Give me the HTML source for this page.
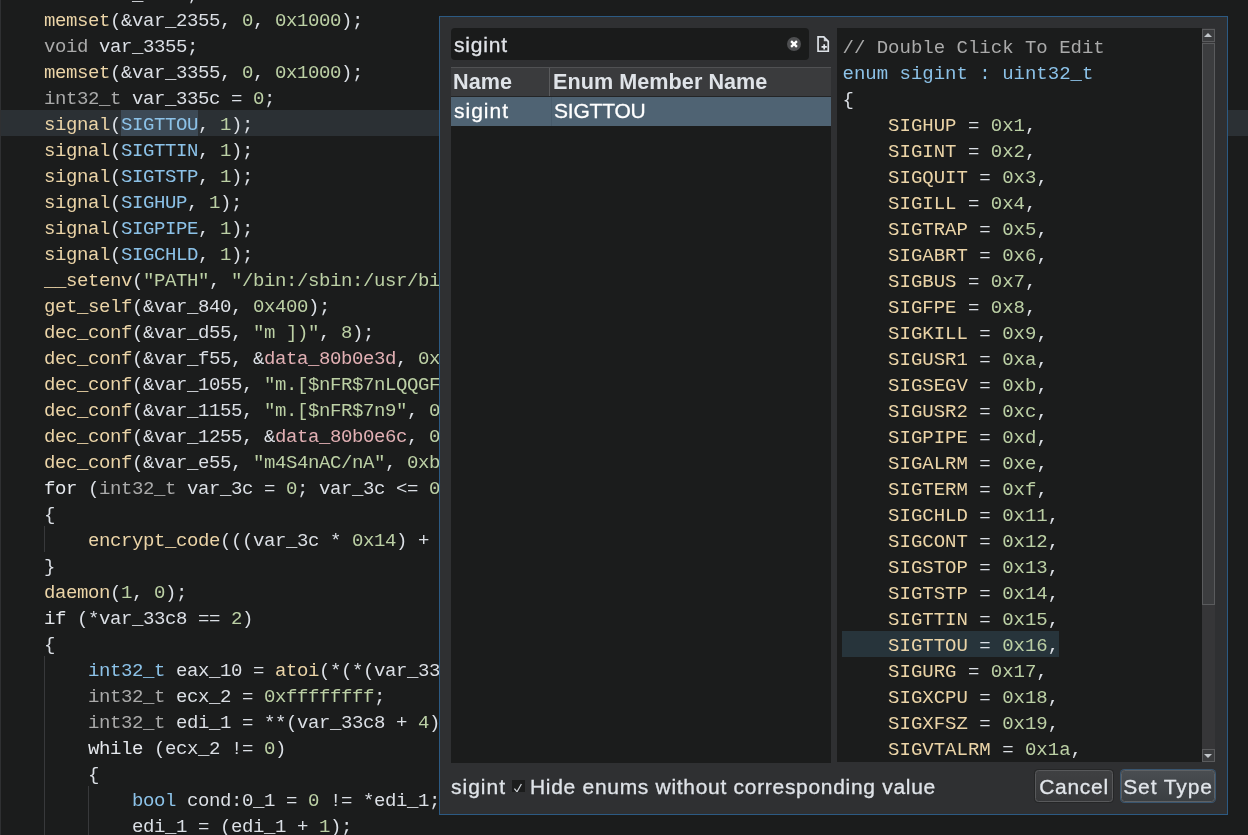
<!DOCTYPE html>
<html>
<head>
<meta charset="utf-8">
<title>Select Enum</title>
<style>
html,body{margin:0;padding:0;}
body{width:1248px;height:835px;overflow:hidden;background:#1b1c1c;position:relative;font-family:"Liberation Sans",sans-serif;}
#root{position:absolute;left:0;top:0;width:1248px;height:835px;will-change:transform;}
#code{position:absolute;left:0;top:0;width:1248px;height:835px;overflow:hidden;font-family:"Liberation Mono","DejaVu Sans Mono",monospace;font-size:19px;letter-spacing:-0.4019px;color:#dbdfe5;}
#code .edge{position:absolute;left:0;top:0;width:1px;height:835px;background:#2f3032;z-index:3;}
.ln{position:absolute;left:0;width:1248px;height:26px;line-height:26px;white-space:pre;}
.ln.hl{background:#2b3034;}
.tx{position:absolute;top:2px;height:26px;}
.guide{position:absolute;width:1px;background:#38393b;}
.f{color:#ebd4a7;}
.n{color:#bcd0a5;}
.s{color:#bcd0a5;}
.t{color:#8cc2e8;}
.g{color:#aaaaaa;}
.e{color:#8cc2e8;}
.h{color:#8cc2e8;background:#3d4a56;display:inline-block;height:26px;position:relative;top:-2px;line-height:30px;vertical-align:top;}
.d{color:#e2b0b4;}
.k{color:#e6e9ee;}
.c{color:#aaaaaa;}
#dlg{position:absolute;left:439px;top:16px;width:787px;height:797px;border:1px solid #2c5a83;background:#2f3032;}
#inp{position:absolute;left:11px;top:11px;width:358px;height:32px;border-radius:4px;background:#1a1b1b;}
#inp .v{position:absolute;left:3px;top:0;line-height:33px;font-size:21px;letter-spacing:0.8px;-webkit-text-stroke:0.3px #e0e3e8;color:#e0e3e8;}
#clr{position:absolute;left:335px;top:8px;width:16px;height:16px;}
#ficon{position:absolute;left:377.3px;top:19.1px;width:13px;height:17px;}
#tbl{position:absolute;left:11px;top:50px;width:380px;height:696px;background:#1b1c1c;}
#th{position:absolute;left:0;top:0;width:380px;height:30px;background:#3a3b3d;border-top:1px solid #505153;border-bottom:1px solid #242526;box-sizing:border-box;}
#th b{position:absolute;top:0;line-height:28px;font-size:21.6px;letter-spacing:0.05px;color:#dfe3e8;font-weight:bold;}
#th .sep{position:absolute;left:98px;top:0;width:1px;height:28px;background:#5a5b5d;}
#tr{position:absolute;left:0;top:30px;width:380px;height:29px;background:#4f6373;}
#tr span{position:absolute;top:0;line-height:28px;font-size:21px;color:#fff;-webkit-text-stroke:0.3px #fff;}
#tr .sep{position:absolute;left:100px;top:0;width:1px;height:29px;background:#485b6b;}
#rp{position:absolute;left:397px;top:11px;width:378px;height:734px;background:#1b1c1c;overflow:hidden;}
#rcode{position:absolute;left:5.5px;top:6.5px;font-family:"Liberation Mono","DejaVu Sans Mono",monospace;font-size:19px;color:#dbdfe5;}
.rl{height:26px;line-height:26px;white-space:pre;position:relative;}
.rbar{position:absolute;left:5px;top:603px;width:217px;height:26px;background:#27343b;}
#sb{position:absolute;left:365px;top:0;width:13px;height:734px;background:#363638;}
#sb .up,#sb .dn{position:absolute;left:0;width:11px;height:11px;border:1px solid #5a5b5d;background:#3b3c3e;}
#sb .up{top:1px;}
#sb .dn{top:721px;}
#sb .thumb{position:absolute;left:0;top:15px;width:11px;height:560px;border:1px solid #5a5b5d;background:#3c3d3f;}
#sb .up i{position:absolute;left:0.5px;top:3px;width:0;height:0;border-left:4px solid transparent;border-right:4px solid transparent;border-bottom:4.5px solid #c2c6ca;}
#sb .dn i{position:absolute;left:0.5px;top:3.5px;width:0;height:0;border-left:4px solid transparent;border-right:4px solid transparent;border-top:4.5px solid #c2c6ca;}
#bot{position:absolute;left:11px;top:754px;height:32px;line-height:32px;font-size:21px;color:#dfe3e8;white-space:nowrap;-webkit-text-stroke:0.3px #dfe3e8;}
#bot span{position:absolute;top:0;}
#cb{position:absolute;left:72px;top:763px;width:13px;height:12px;background:#1b1c1c;overflow:hidden;}
.btn{position:absolute;top:753px;height:30px;border:1px solid #58595b;border-radius:3.5px;background:linear-gradient(#3f4042,#37383a);box-shadow:0 0 0 1px #252627;color:#e1e5ea;font-size:21px;line-height:32px;text-align:center;-webkit-text-stroke:0.3px #e1e5ea;}
#b1{left:595px;width:76px;letter-spacing:0.7px;}
#b2{left:681px;width:92px;border-color:#5e6164;background:linear-gradient(#494d51,#3b3f42);box-shadow:0 0 0 1px #39556f;letter-spacing:0.9px;}
</style>
</head>
<body>
<div id="root">
<div id="code">
<div class="edge"></div>
<div class="ln" style="top:-20px"><span class="tx" style="left:44px"><span class="g">void</span> var_2355;</span></div>
<div class="ln" style="top:6px"><span class="tx" style="left:44px"><span class="f">memset</span>(&amp;var_2355, <span class="n">0</span>, <span class="n">0x1000</span>);</span></div>
<div class="ln" style="top:32px"><span class="tx" style="left:44px"><span class="g">void</span> var_3355;</span></div>
<div class="ln" style="top:58px"><span class="tx" style="left:44px"><span class="f">memset</span>(&amp;var_3355, <span class="n">0</span>, <span class="n">0x1000</span>);</span></div>
<div class="ln" style="top:84px"><span class="tx" style="left:44px"><span class="g">int32_t</span> var_335c = <span class="n">0</span>;</span></div>
<div class="ln hl" style="top:110px"><span class="tx" style="left:44px"><span class="f">signal</span>(<span class="h">SIGTTOU</span>, <span class="n">1</span>);</span></div>
<div class="ln" style="top:136px"><span class="tx" style="left:44px"><span class="f">signal</span>(<span class="e">SIGTTIN</span>, <span class="n">1</span>);</span></div>
<div class="ln" style="top:162px"><span class="tx" style="left:44px"><span class="f">signal</span>(<span class="e">SIGTSTP</span>, <span class="n">1</span>);</span></div>
<div class="ln" style="top:188px"><span class="tx" style="left:44px"><span class="f">signal</span>(<span class="e">SIGHUP</span>, <span class="n">1</span>);</span></div>
<div class="ln" style="top:214px"><span class="tx" style="left:44px"><span class="f">signal</span>(<span class="e">SIGPIPE</span>, <span class="n">1</span>);</span></div>
<div class="ln" style="top:240px"><span class="tx" style="left:44px"><span class="f">signal</span>(<span class="e">SIGCHLD</span>, <span class="n">1</span>);</span></div>
<div class="ln" style="top:266px"><span class="tx" style="left:44px"><span class="f">__setenv</span>(<span class="s">"PATH"</span>, <span class="s">"/bin:/sbin:/usr/bin:/usr/sbin"</span>, <span class="n">1</span>);</span></div>
<div class="ln" style="top:292px"><span class="tx" style="left:44px"><span class="f">get_self</span>(&amp;var_840, <span class="n">0x400</span>);</span></div>
<div class="ln" style="top:318px"><span class="tx" style="left:44px"><span class="f">dec_conf</span>(&amp;var_d55, <span class="s">"m ])"</span>, <span class="n">8</span>);</span></div>
<div class="ln" style="top:344px"><span class="tx" style="left:44px"><span class="f">dec_conf</span>(&amp;var_f55, &amp;<span class="d">data_80b0e3d</span>, <span class="n">0x12</span>);</span></div>
<div class="ln" style="top:370px"><span class="tx" style="left:44px"><span class="f">dec_conf</span>(&amp;var_1055, <span class="s">"m.[$nFR$7nLQQGF"</span>, <span class="n">0x12</span>);</span></div>
<div class="ln" style="top:396px"><span class="tx" style="left:44px"><span class="f">dec_conf</span>(&amp;var_1155, <span class="s">"m.[$nFR$7n9"</span>, <span class="n">0xc</span>);</span></div>
<div class="ln" style="top:422px"><span class="tx" style="left:44px"><span class="f">dec_conf</span>(&amp;var_1255, &amp;<span class="d">data_80b0e6c</span>, <span class="n">0xc</span>);</span></div>
<div class="ln" style="top:448px"><span class="tx" style="left:44px"><span class="f">dec_conf</span>(&amp;var_e55, <span class="s">"m4S4nAC/nA"</span>, <span class="n">0xb</span>);</span></div>
<div class="ln" style="top:474px"><span class="tx" style="left:44px"><span class="k">for</span> (<span class="g">int32_t</span> var_3c = <span class="n">0</span>; var_3c &lt;= <span class="n">0x16</span>; var_3c = (var_3c + <span class="n">1</span>))</span></div>
<div class="ln" style="top:500px"><span class="tx" style="left:44px">{</span></div>
<div class="ln" style="top:526px"><span class="tx" style="left:88px"><span class="f">encrypt_code</span>(((var_3c * <span class="n">0x14</span>) + &amp;<span class="d">data_80cf2a0</span>), <span class="n">0x14</span>);</span></div>
<div class="ln" style="top:552px"><span class="tx" style="left:44px">}</span></div>
<div class="ln" style="top:578px"><span class="tx" style="left:44px"><span class="f">daemon</span>(<span class="n">1</span>, <span class="n">0</span>);</span></div>
<div class="ln" style="top:604px"><span class="tx" style="left:44px"><span class="k">if</span> (*var_33c8 == <span class="n">2</span>)</span></div>
<div class="ln" style="top:630px"><span class="tx" style="left:44px">{</span></div>
<div class="ln" style="top:656px"><span class="tx" style="left:88px"><span class="t">int32_t</span> eax_10 = <span class="f">atoi</span>(*(*(var_33c8 + <span class="n">4</span>) + <span class="n">4</span>));</span></div>
<div class="ln" style="top:682px"><span class="tx" style="left:88px"><span class="g">int32_t</span> ecx_2 = <span class="n">0xffffffff</span>;</span></div>
<div class="ln" style="top:708px"><span class="tx" style="left:88px"><span class="g">int32_t</span> edi_1 = **(var_33c8 + <span class="n">4</span>);</span></div>
<div class="ln" style="top:734px"><span class="tx" style="left:88px"><span class="k">while</span> (ecx_2 != <span class="n">0</span>)</span></div>
<div class="ln" style="top:760px"><span class="tx" style="left:88px">{</span></div>
<div class="ln" style="top:786px"><span class="tx" style="left:132px"><span class="t">bool</span> cond:0_1 = <span class="n">0</span> != *edi_1;</span></div>
<div class="ln" style="top:812px"><span class="tx" style="left:132px">edi_1 = (edi_1 + <span class="n">1</span>);</span></div>
<div class="guide" style="left:44px;top:526px;height:26px"></div>
<div class="guide" style="left:44px;top:656px;height:179px"></div>
<div class="guide" style="left:88px;top:786px;height:49px"></div>
</div>
<div id="dlg">
<div id="inp"><span class="v">sigint</span>
<svg id="clr" viewBox="0 0 16 16"><circle cx="8" cy="8" r="7" fill="#4e4f51"/><path d="M5.1 5.1 L10.9 10.9 M10.9 5.1 L5.1 10.9" stroke="#ffffff" stroke-width="2.3" stroke-linecap="butt"/></svg>
</div>
<svg id="ficon" viewBox="0 0 13 17"><path d="M6.8 0.85 V5.3 H11.25 Z" fill="#c4c8ce"/><path d="M1.05 0.85 H6.8 L11.25 5.3 V15.25 H1.05 Z" fill="none" stroke="#dde1e7" stroke-width="1.7" stroke-linejoin="miter"/><path d="M7.2 8.2 V13.6 M4.5 10.9 H9.9" stroke="#e4e8ee" stroke-width="1.7"/></svg>
<div id="tbl">
<div id="th"><b style="left:2px">Name</b><i class="sep"></i><b style="left:102px">Enum Member Name</b></div>
<div id="tr"><span style="left:3px;letter-spacing:1px">sigint</span><i class="sep"></i><span style="left:103px;letter-spacing:-0.2px">SIGTTOU</span></div>
</div>
<div id="rp">
<div class="rbar"></div>
<div id="rcode">
<div class="rl"><span class="c">// Double Click To Edit</span></div>
<div class="rl"><span class="t">enum sigint : uint32_t</span></div>
<div class="rl">{</div>
<div class="rl">    <span class="f">SIGHUP</span> = <span class="n">0x1</span>,</div>
<div class="rl">    <span class="f">SIGINT</span> = <span class="n">0x2</span>,</div>
<div class="rl">    <span class="f">SIGQUIT</span> = <span class="n">0x3</span>,</div>
<div class="rl">    <span class="f">SIGILL</span> = <span class="n">0x4</span>,</div>
<div class="rl">    <span class="f">SIGTRAP</span> = <span class="n">0x5</span>,</div>
<div class="rl">    <span class="f">SIGABRT</span> = <span class="n">0x6</span>,</div>
<div class="rl">    <span class="f">SIGBUS</span> = <span class="n">0x7</span>,</div>
<div class="rl">    <span class="f">SIGFPE</span> = <span class="n">0x8</span>,</div>
<div class="rl">    <span class="f">SIGKILL</span> = <span class="n">0x9</span>,</div>
<div class="rl">    <span class="f">SIGUSR1</span> = <span class="n">0xa</span>,</div>
<div class="rl">    <span class="f">SIGSEGV</span> = <span class="n">0xb</span>,</div>
<div class="rl">    <span class="f">SIGUSR2</span> = <span class="n">0xc</span>,</div>
<div class="rl">    <span class="f">SIGPIPE</span> = <span class="n">0xd</span>,</div>
<div class="rl">    <span class="f">SIGALRM</span> = <span class="n">0xe</span>,</div>
<div class="rl">    <span class="f">SIGTERM</span> = <span class="n">0xf</span>,</div>
<div class="rl">    <span class="f">SIGCHLD</span> = <span class="n">0x11</span>,</div>
<div class="rl">    <span class="f">SIGCONT</span> = <span class="n">0x12</span>,</div>
<div class="rl">    <span class="f">SIGSTOP</span> = <span class="n">0x13</span>,</div>
<div class="rl">    <span class="f">SIGTSTP</span> = <span class="n">0x14</span>,</div>
<div class="rl">    <span class="f">SIGTTIN</span> = <span class="n">0x15</span>,</div>
<div class="rl">    <span class="f">SIGTTOU</span> = <span class="n">0x16</span>,</div>
<div class="rl">    <span class="f">SIGURG</span> = <span class="n">0x17</span>,</div>
<div class="rl">    <span class="f">SIGXCPU</span> = <span class="n">0x18</span>,</div>
<div class="rl">    <span class="f">SIGXFSZ</span> = <span class="n">0x19</span>,</div>
<div class="rl">    <span class="f">SIGVTALRM</span> = <span class="n">0x1a</span>,</div>
</div>
<div id="sb"><div class="up"><i></i></div><div class="thumb"></div><div class="dn"><i></i></div></div>
</div>
<div id="bot"><span style="left:0;letter-spacing:1px">sigint</span><span style="left:79px;letter-spacing:0.7px">Hide enums without corresponding value</span></div>
<div id="cb"><svg width="13" height="12" viewBox="0 0 13 12"><path d="M2.4 6.6 L5 9.8 L9.4 2" fill="none" stroke="#d0d4d9" stroke-width="1.25"/></svg></div>
<div class="btn" id="b1">Cancel</div>
<div class="btn" id="b2">Set Type</div>
</div>
</div>
</body>
</html>
